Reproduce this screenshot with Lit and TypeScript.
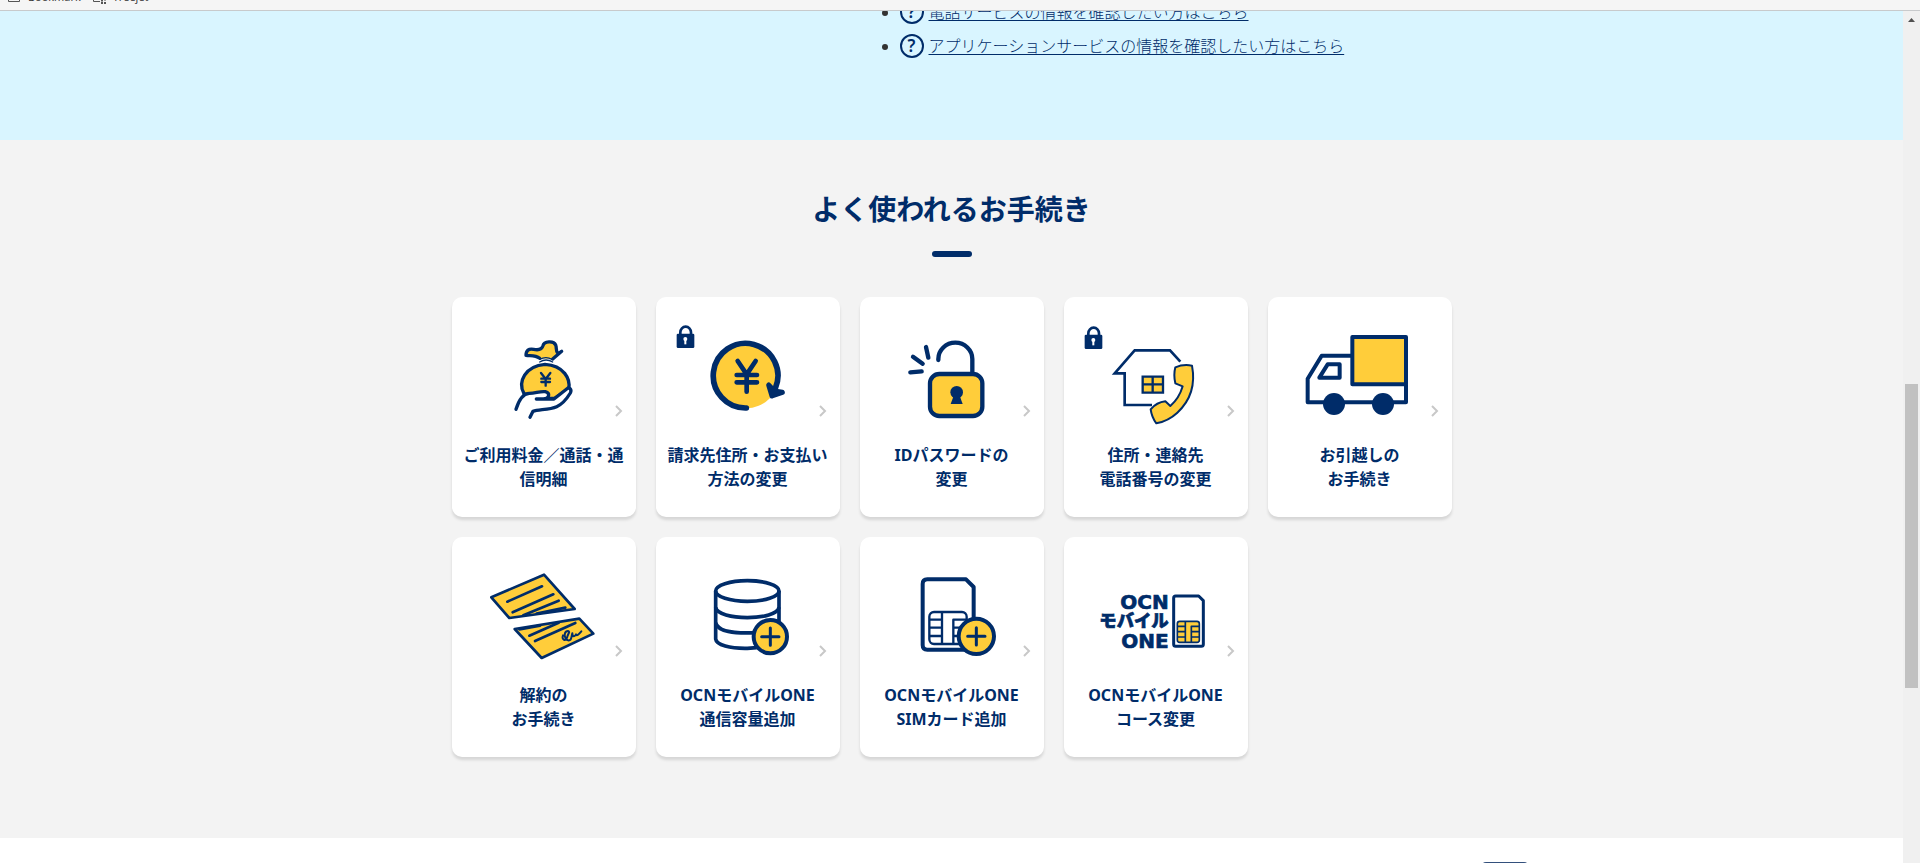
import { LitElement, html, svg, css } from "lit";
import { customElement } from "lit/decorators.js";

const NAVY = "#002c69";
const YELLOW = "#ffcd3a";

// Small padlock marking procedures that require login.
const lock = (x: number, y: number) => svg`
  <g transform="translate(${x} ${y})">
    <path d="M10 30V22A16 17 0 0 1 42 22V30" fill="none" stroke=${NAVY} stroke-width="8" />
    <rect x="-1" y="26" width="53" height="43" rx="4" fill=${NAVY} />
    <circle cx="25" cy="42" r="6" fill="#fff" />
    <rect x="22" y="42" width="6" height="16" fill="#fff" />
  </g>`;

const plus = (x: number, y: number, r: number) => svg`
  <circle cx=${x} cy=${y} r=${r} fill=${YELLOW} stroke=${NAVY} stroke-width="12" />
  <path d="M${x - 26} ${y}H${x + 26}M${x} ${y - 26}V${y + 26}" stroke=${NAVY} stroke-width="9" stroke-linecap="round" />`;

const moneyBag = svg`
  <g stroke=${NAVY} stroke-width="10" stroke-linecap="round" stroke-linejoin="round">
    <path fill=${YELLOW} d="M299 220C286 209 272 213 258 211C258 196 266 190 281 193C296 196 306 193 309 182C312 168 341 166 347 180C351 190 346 197 354 206L365 199L338 222" />
    <path fill="none" stroke-width="4" d="M299 223Q318 213 336 223M299 231Q318 219 338 231" />
    <path fill=${YELLOW} d="M252 326C232 290 256 243 315 238C372 241 392 283 386 311L344 340H292Z" />
    <path fill="#fff" stroke="none" d="M228 372Q246 328 272 325L318 319L328 330L322 342H343L384 309L394 318L366 356L345 368L278 377L270 398L240 388Z" />
    <path fill="none" d="M228 373C235 350 246 326 268 325C288 324 301 318 316 320C331 324 329 341 310 342H289M310 342H342L380 312C389 305 396 314 391 324C380 342 366 358 350 365C327 375 296 373 279 379L270 397" />
    <path fill="none" stroke-width="7" d="M303 264L317 282L331 264M317 282V302M304 281H330M304 291H330" />
  </g>`;

const yenCycle = svg`
  ${lock(711, 120)}
  <circle cx="918" cy="271" r="99" fill=${YELLOW} />
  <g fill="none" stroke=${NAVY} stroke-linecap="round" stroke-linejoin="round">
    <path d="M919 369A97 97 0 1 1 1006 310" stroke-width="17" />
    <path d="M986 300L996 333L1027 322L1003 318Z" fill=${NAVY} stroke-width="15" />
    <path d="M893 228L920 268L947 228M920 268V320M890 270H951M890 292H951" stroke-width="14" />
  </g>`;

const openPadlock = svg`
  <g stroke=${NAVY} stroke-width="13" stroke-linecap="round" fill="none">
    <path d="M295 225V222A51 49 0 0 1 397 222V266" />
    <rect x="270" y="267" width="157" height="126" rx="28" fill=${YELLOW} />
    <path d="M258 186L265 218M219 215L248 236M211 262L245 259" />
  </g>
  <circle cx="350" cy="322" r="19" fill=${NAVY} />
  <path d="M341 332H359L368 357H332Z" fill=${NAVY} />`;

const housePhone = svg`
  ${lock(735, 123)}
  <g stroke=${NAVY} stroke-width="8" fill="none">
    <path d="M1021 230L990 196H884L824 265H854V360H936" />
    <path fill=${YELLOW} stroke-width="7" d="M908 275H969V323H908ZM938 275V323M908 298H969" />
    <path fill=${YELLOW} stroke-width="6" stroke-linejoin="round" d="M1006 247Q1030 237 1056 242C1067 300 1050 348 1012 383Q985 408 949 415Q935 396 932 373Q950 352 976 349L991 363C1006 350 1022 325 1028 304L1006 295Q1000 270 1006 247Z" />
  </g>`;

const truck = svg`
  <g stroke=${NAVY} stroke-width="12" fill="none" stroke-linejoin="round">
    <path d="M336 212H245L203 281V352H498V298" />
    <path d="M263 238H299V278H238Z" />
    <rect x="337" y="156" width="161" height="142" fill=${YELLOW} />
  </g>
  <circle cx="282" cy="357" r="33" fill=${NAVY} />
  <circle cx="429" cy="357" r="33" fill=${NAVY} />`;

const tornContract = svg`
  <g stroke=${NAVY} stroke-width="8" fill="none" stroke-linecap="round" stroke-linejoin="round">
    <path fill=${YELLOW} d="M154 217L312 149L404 252L208 279Z" />
    <path d="M202 230L306 184M218 262L340 208M250 271L356 227M290 266L376 248" />
    <path fill=${YELLOW} d="M224 312L418 281L460 326L305 399Z" />
    <path d="M238 313L300 302M268 332L356 293M285 348L406 294" />
    <path stroke-width="6" d="M369 331C363 345 379 350 381 338C384 325 392 320 384 318C374 318 372 330 376 338C380 348 392 350 394 338L397 325C397 336 404 336 408 328C409 336 418 326 424 319" />
  </g>`;

const dataAdd = svg`
  <g stroke=${NAVY} stroke-width="11" fill="none">
    <ellipse cx="922" cy="198" rx="95" ry="31" />
    <path d="M827 198V342C829 360 870 371 922 370L950 368M1017 198V290" />
    <path d="M827 247C832 288 1012 288 1017 247M827 293C834 320 880 326 948 323" />
  </g>
  ${plus(991, 335, 50)}`;

const simAdd = svg`
  <g stroke=${NAVY} fill="none" stroke-linejoin="round">
    <path stroke-width="12" d="M262 163H378L401 186V374H262Q248 374 248 360V177Q248 163 262 163Z" />
    <rect stroke-width="7" x="268" y="261" width="112" height="96" rx="14" />
    <path stroke-width="7" d="M306 261V357M268 284H306M268 308H306M268 333H306M380 284H340V357M340 308H365M340 333H365" />
  </g>
  ${plus(409, 334, 53)}`;

const ocnMobile = svg`
  <g fill=${NAVY} stroke=${NAVY} stroke-width="2" font-weight="700" text-anchor="end">
    <text x="986" y="251" font-size="60" font-family="DejaVu Sans, sans-serif">OCN</text>
    <text x="986" y="307" font-size="52" font-weight="900" font-family="Noto Sans CJK JP, sans-serif">モバイル</text>
    <text x="986" y="368" font-size="60" font-family="DejaVu Sans, sans-serif">ONE</text>
  </g>
  <g stroke=${NAVY} fill="none" stroke-linejoin="round">
    <path stroke-width="9" d="M1007 213H1076L1090 227V358Q1090 364 1084 364H1007Q1001 364 1001 358V219Q1001 213 1007 213Z" />
    <rect stroke-width="5" x="1012" y="289" width="66" height="63" rx="7" fill=${YELLOW} />
    <path stroke-width="5" d="M1036 289V352M1012 304H1036M1012 320H1036M1012 336H1036M1078 304H1054V352M1054 320H1078M1054 336H1078" />
  </g>`;

// ox is the left edge of each drawing's coordinate system (three units per pixel).
const items = [
  { ox: 36, art: moneyBag, lines: ["ご利用料金／通話・通信明細"] },
  { ox: 648, art: yenCycle, lines: ["請求先住所・お支払い方法の変更"] },
  { ox: 60, art: openPadlock, lines: ["IDパスワードの", "変更"] },
  { ox: 672, art: housePhone, lines: ["住所・連絡先", "電話番号の変更"] },
  { ox: 84, art: truck, lines: ["お引越しの", "お手続き"] },
  { ox: 36, art: tornContract, lines: ["解約の", "お手続き"] },
  { ox: 648, art: dataAdd, lines: ["OCNモバイルONE", "通信容量追加"] },
  { ox: 60, art: simAdd, lines: ["OCNモバイルONE", "SIMカード追加"] },
  { ox: 672, art: ocnMobile, lines: ["OCNモバイルONE", "コース変更"] },
];

const faqLinks = [
  "電話サービスの情報を確認したい方はこちら",
  "アプリケーションサービスの情報を確認したい方はこちら",
];

@customElement("bookmark-bar")
export class BookmarkBar extends LitElement {
  static styles = css`
    :host {
      display: flex;
      align-items: flex-end;
      gap: 12px;
      box-sizing: border-box;
      height: 11px;
      padding: 0 8px 5px;
      overflow: hidden;
      background: #f5f5f5;
      border-bottom: 1px solid #c8cacc;
      font: 11px/16px "Open Sans", sans-serif;
      color: #333;
    }
    .item { display: flex; gap: 6px; }
    .icon { width: 14px; height: 16px; }
  `;
  render() {
    return html`
      <span class="item">
        <svg class="icon" viewBox="0 0 14 16" fill="none" stroke="#555"><path d="M.5 3.500H5L6.500 5.500H11.500V12.500H.5Z" /></svg>
        Bookmark
      </span>
      <span class="item">
        <svg class="icon" viewBox="0 0 14 16" fill="none" stroke="#555">
          <path d="M7 12.500H.5V3.500H5L6.500 5.500H11.500V8" />
          <path d="M8 11.500H10M11 10.500H13M8 14H10M11 14H13" stroke-width="2" />
        </svg>
        Treejet
      </span>`;
  }
}

@customElement("page-scrollbar")
export class PageScrollbar extends LitElement {
  static styles = css`
    :host {
      display: flex;
      flex-direction: column;
      background: #f0f0f0;
    }
    .arrow { width: 17px; height: 16px; flex: none; }
    .before { flex: 357; }
    .thumb { flex: 304; margin: 0 2px; background: #c1c1c1; }
    .after { flex: 175; }
  `;
  render() {
    return html`
      <svg class="arrow" viewBox="0 0 17 16"><path d="M5 11L8.500 7L12 11Z" fill="#505050" /></svg>
      <div class="before"></div>
      <div class="thumb"></div>
      <div class="after"></div>`;
  }
}

@customElement("app-root")
export class AppRoot extends LitElement {
  static styles = css`
    :host {
      display: flex;
      flex-direction: column;
      height: 100vh;
      overflow: hidden;
      font-family: "Noto Sans", "Noto Sans CJK JP", sans-serif;
      font-size: 16px;
      line-height: 24px;
      color: #333;
    }
    .window {
      flex: 1;
      min-height: 0;
      display: grid;
      grid-template-columns: minmax(0, 1fr) 17px;
    }
    .page { min-height: 0; overflow: hidden; background: #fff; }
    .wrap { max-width: 1000px; margin: 0 auto; }
    .faq { display: flow-root; background: #d9f5ff; padding-bottom: 77px; }
    .faq ul { margin: -16px 0 0; padding: 0 0 0 448px; }
    .faq li { height: 34px; line-height: 34px; }
    .faq a {
      display: inline-flex;
      align-items: center;
      gap: 5px;
      color: #002c69;
      font-weight: 300;
      text-decoration: none;
      vertical-align: top;
    }
    .faq .label {
      text-decoration: underline;
      text-underline-offset: 2px;
    }
    .mark {
      box-sizing: border-box;
      width: 24px;
      height: 24px;
      border: 2px solid #002c69;
      border-radius: 50%;
      font-size: 17px;
      font-weight: 600;
      line-height: 20px;
      text-align: center;
    }
    .procedures { background: #f3f3f3; padding: 48px 0 81px; }
    h2 {
      display: flex;
      flex-direction: column;
      align-items: center;
      gap: 21px;
      margin: 0 0 40px;
      font-size: 28px;
      line-height: 42px;
      font-weight: 700;
      color: #002c69;
    }
    h2::after {
      content: "";
      width: 40px;
      height: 6px;
      border-radius: 3px;
      background: #002c69;
    }
    .cards {
      display: grid;
      grid-template-columns: repeat(5, 1fr);
      gap: 20px;
      margin: 0 auto;
      padding: 0;
      list-style: none;
    }
    .card {
      position: relative;
      display: block;
      padding-bottom: 26px;
      border-radius: 10px;
      background: #fff;
      box-shadow: 0 3px 3px rgba(0, 0, 0, 0.12);
      color: #002c69;
      font-weight: 700;
      text-align: center;
      text-decoration: none;
    }
    .art { display: block; width: 100%; height: 146px; }
    .caption { display: block; padding: 0 11px; }
    .line { display: block; }
    .chevron {
      position: absolute;
      right: 13px;
      top: 108px;
      width: 8px;
      height: 12px;
    }
    .foot {
      display: flex;
      justify-content: flex-end;
      padding: 24px calc(50% - 576px) 24px 0;
    }
    .top {
      width: 46px;
      height: 46px;
      padding: 0;
      border: 0;
      border-radius: 4px;
      background: #33507c;
      color: #fff;
    }
  `;

  render() {
    return html`
      <bookmark-bar></bookmark-bar>
      <div class="window">
        <main class="page">
          <section class="faq">
            <div class="wrap">
              <ul>
                ${faqLinks.map(
                  (t) => html`<li><a href="#"><span class="mark" aria-hidden="true">?</span><span class="label">${t}</span></a></li>`
                )}
              </ul>
            </div>
          </section>
          <section class="procedures">
            <h2>よく使われるお手続き</h2>
            <ul class="cards wrap">
              ${items.map(
                (it) => html`<li>
                  <a class="card" href="#">
                    <svg class="art" viewBox="${it.ox} 36 552 438" aria-hidden="true">${it.art}</svg>
                    <span class="caption">${it.lines.map((l) => html`<span class="line">${l}</span>`)}</span>
                    <svg class="chevron" viewBox="0 0 8 12" fill="none" stroke="#c8c8c8" stroke-width="2" aria-hidden="true"><path d="M1 1L6 6L1 11" /></svg>
                  </a>
                </li>`
              )}
            </ul>
          </section>
          <footer class="foot">
            <button class="top" type="button" aria-label="ページの先頭へ"></button>
          </footer>
        </main>
        <page-scrollbar></page-scrollbar>
      </div>`;
  }
}
